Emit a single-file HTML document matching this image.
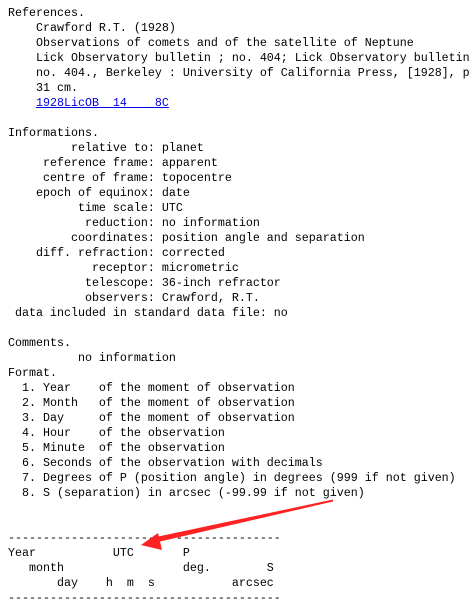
<!DOCTYPE html>
<html><head><meta charset="utf-8"><style>
html,body{margin:0;padding:0;background:#fff;width:469px;height:606px;overflow:hidden;position:relative}
pre{margin:0;position:absolute;left:8px;top:6px;font-family:"Liberation Mono",monospace;font-size:11.67px;line-height:15px;color:#000;white-space:pre}
a{color:#0000ee;text-decoration:underline}
svg{position:absolute;left:0;top:0}
</style></head><body>
<pre>References.
    Crawford R.T. (1928)
    Observations of comets and of the satellite of Neptune
    Lick Observatory bulletin ; no. 404; Lick Observatory bulletin
    no. 404., Berkeley : University of California Press, [1928], p
    31 cm.
    <a>1928LicOB  14    8C</a>

Informations.
         relative to: planet
     reference frame: apparent
     centre of frame: topocentre
    epoch of equinox: date
          time scale: UTC
           reduction: no information
         coordinates: position angle and separation
    diff. refraction: corrected
            receptor: micrometric
           telescope: 36-inch refractor
           observers: Crawford, R.T.
 data included in standard data file: no

Comments.
          no information
Format.
  1. Year    of the moment of observation
  2. Month   of the moment of observation
  3. Day     of the moment of observation
  4. Hour    of the observation
  5. Minute  of the observation
  6. Seconds of the observation with decimals
  7. Degrees of P (position angle) in degrees (999 if not given)
  8. S (separation) in arcsec (-99.99 if not given)


---------------------------------------
Year           UTC       P
   month                 deg.        S
       day    h  m  s           arcsec
---------------------------------------</pre>
<svg width="469" height="606"><polygon points="333,499.5 333,501.5 158,542 156,537" fill="#f22"/><polygon points="141,545 158,533 162,550" fill="#f22"/></svg>
</body></html>
